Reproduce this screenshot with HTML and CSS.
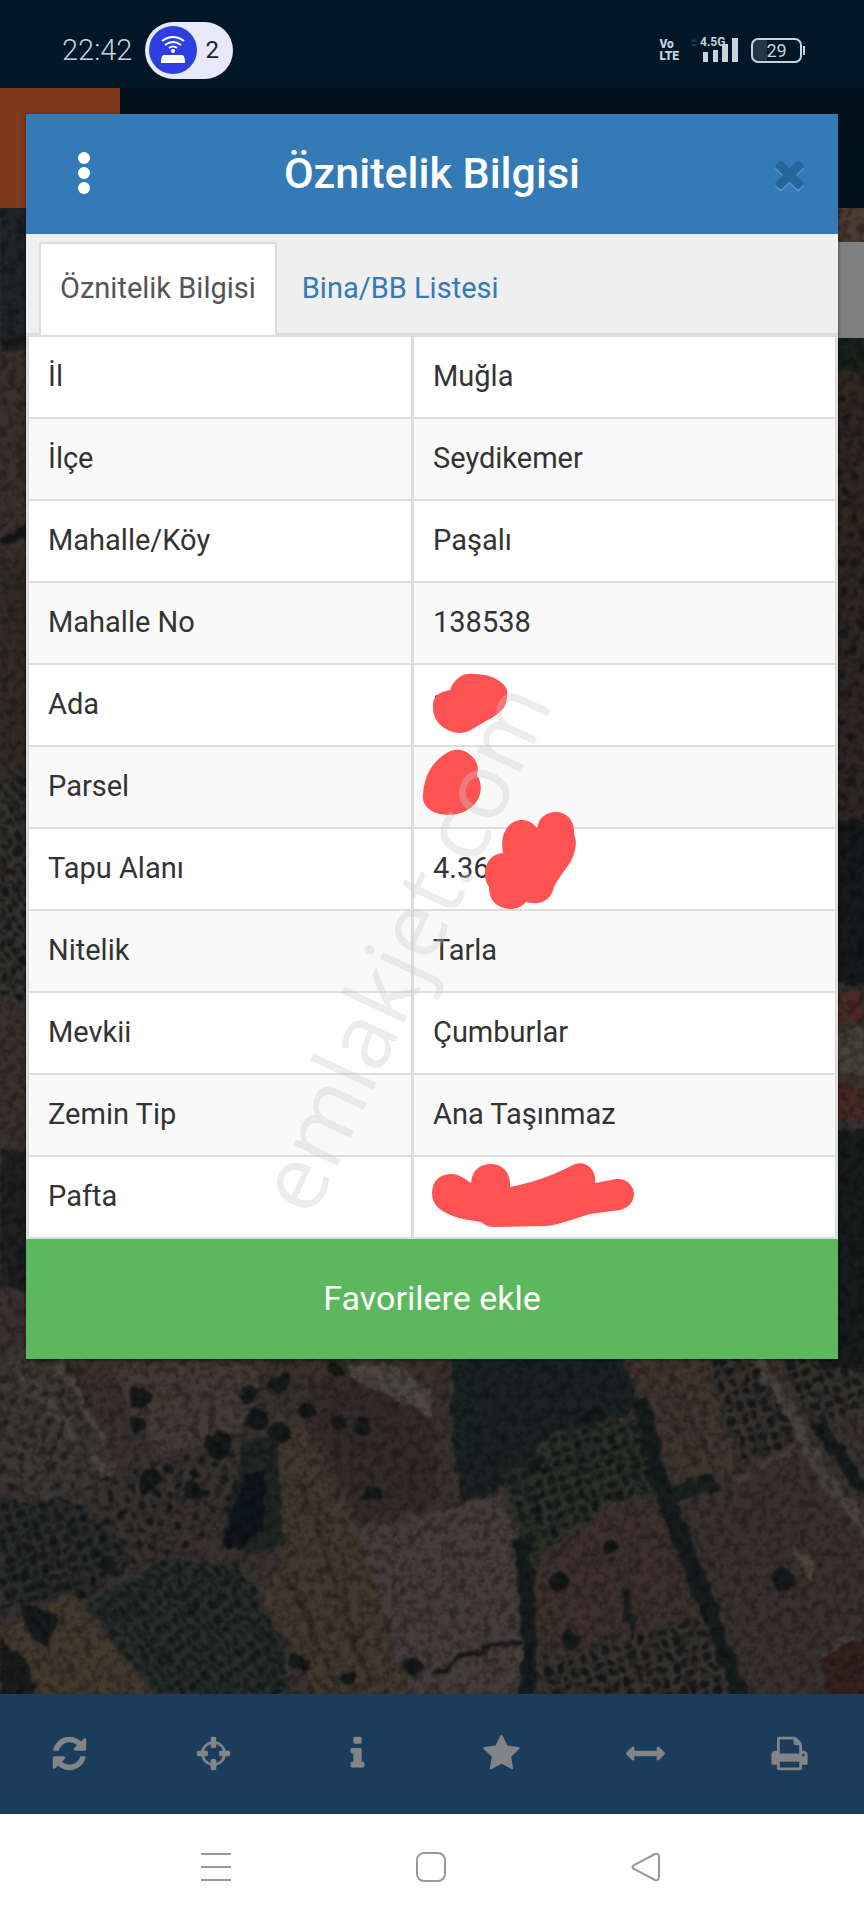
FILE: index.html
```
<!DOCTYPE html>
<html lang="tr">
<head>
    <meta charset="UTF-8">
    <meta name="viewport" content="width=device-width, initial-scale=1.0">
    <title>Öznitelik Bilgisi</title>
    <link rel="stylesheet" href="styles.css">
</head>
<body>
    <div class="screen">
        <header class="status">
            <span class="clock">22:42</span>
            <span class="pill">
                <svg class="hotspot" viewBox="0 0 48 48" aria-hidden="true">
                    <circle cx="24" cy="24" r="24" fill="#2e3fe0"/>
                    <g fill="none" stroke="#fff" stroke-width="2">
                        <path d="M13 15q11-8 22 0"/>
                        <path d="M16 19q8-6 16 0"/>
                        <path d="M20 22q4-3 8 0"/>
                    </g>
                    <circle cx="24" cy="25" r="2" fill="#fff"/>
                    <path d="M15 29h18q3 0 3 8h-24q0-8 3-8z" fill="#fff"/>
                </svg>
                <span>2</span>
            </span>
            <span class="volte"><span>Vo</span><span>LTE</span></span>
            <span class="signal">
                <span class="net">4.5G</span>
                <svg viewBox="0 0 50 26" aria-hidden="true">
                    <path d="M1 5l4-3 4 3zM1 7h8l-4 3z" fill="#243746"/>
                    <path d="M14 15h5v10h-5zM24 13h5v12h-5zM33 7h6v18h-6zM43 1h6v24h-6z" fill="#c9d1d9"/>
                </svg>
            </span>
            <span class="battery"><span>29</span></span>
        </header>

        <div class="app-bar"><div class="logo"></div></div>

        <main class="map">
            <svg class="map-image" viewBox="0 208 864 1486" preserveAspectRatio="xMidYMid slice" aria-hidden="true">
                <defs>
                    <pattern id="trees" width="12" height="12" patternUnits="userSpaceOnUse" patternTransform="rotate(-18)">
                        <circle cx="6" cy="6" r="4" fill="#161b1b"/>
                    </pattern>
                    <pattern id="sparse" width="21" height="19" patternUnits="userSpaceOnUse" patternTransform="rotate(-28)">
                        <circle cx="6" cy="6" r="4" fill="#1a1b1c"/>
                        <circle cx="16" cy="15" r="3" fill="#1f1e1f"/>
                    </pattern>
                    <pattern id="rows" width="9" height="13" patternUnits="userSpaceOnUse" patternTransform="rotate(-38)">
                        <ellipse cx="4" cy="6" rx="3" ry="5" fill="#171f1e"/>
                    </pattern>
                    <filter id="rough" x="0" y="0" width="1" height="1" color-interpolation-filters="sRGB">
                        <feTurbulence type="fractalNoise" baseFrequency="0.06" numOctaves="3" seed="4" result="n"/>
                        <feDisplacementMap in="SourceGraphic" in2="n" scale="14" xChannelSelector="R" yChannelSelector="G" result="d"/>
                        <feGaussianBlur in="d" stdDeviation="1"/>
                    </filter>
                    <filter id="grain" x="0" y="0" width="1" height="1" color-interpolation-filters="sRGB">
                        <feTurbulence type="fractalNoise" baseFrequency="0.12" numOctaves="3" seed="9"/>
                        <feColorMatrix values="0 0 0 0 0  0 0 0 0 0  0 0 0 0 0  3 0 0 0 -1.2"/>
                    </filter>
                </defs>
                <g filter="url(#rough)">
                    <rect y="208" width="864" height="1486" fill="#38322f"/>
                    <!-- left edge -->
                    <rect y="200" width="60" height="150" fill="#202426"/>
                    <rect y="350" width="60" height="210" fill="#38302c"/>
                    <path d="M0 345l60-16M0 545l60-35" stroke="#171718" stroke-width="7"/>
                    <rect y="560" width="60" height="220" fill="#302b26"/>
                    <rect y="780" width="60" height="220" fill="url(#rows)"/>
                    <rect y="1150" width="40" height="140" fill="#1f2021"/>
                    <!-- right edge -->
                    <rect x="820" y="200" width="60" height="50" fill="#4a3d34"/>
                    <rect x="820" y="330" width="60" height="40" fill="#18211b"/>
                    <rect x="820" y="370" width="60" height="450" fill="#302724"/>
                    <rect x="820" y="400" width="60" height="420" fill="url(#sparse)"/>
                    <rect x="820" y="820" width="60" height="165" fill="#17191b"/>
                    <path d="M834 990l30 4v32l-30-4zM834 1080l30 12v24l-30 6z" fill="#4b2a25"/>
                    <path d="M834 1034l30-4v40l-30 6z" fill="#46433e"/>
                    <rect x="820" y="1130" width="60" height="240" fill="#191c1c"/>
                    <!-- scrub and tracks on the left -->
                    <path d="M0 1350h60l60 120-50 40-70-30z" fill="#3d3835"/>
                    <path d="M20 1370l50 60 40 45M55 1360l50 80" stroke="#484441" stroke-width="9" fill="none"/>
                    <path d="M110 1365h150l-5 60-90 30-25-20z" fill="#423a36"/>
                    <path d="M345 1365l50 0 37 30v35l-60-30z" fill="#4b4642"/>
                    <path d="M300 1395l40-25 95 50v85l-75 18z" fill="#332b2a"/>
                    <path d="M0 1360h90v130H0z" fill="url(#sparse)" opacity=".6"/>
                    <path d="M100 1480l110-35 40 10-10 50-60 50-90 20z" fill="url(#sparse)"/>
                    <path d="M0 1500h75l60 60-50 38-85 10z" fill="#2c2c2d"/>
                    <path d="M0 1500h75l60 60-50 38-85 10z" fill="url(#trees)"/>
                    <path d="M0 1630l72-35 90 99H0z" fill="#43392f"/>
                    <path d="M0 1640l30 25 5 35H0z" fill="#1b1b1b"/>
                    <path d="M20 1605l35 10-5 35-15-5z" fill="#161b1d"/>
                    <path d="M85 1605l75-45 80 5 45 80 5 49H155z" fill="#292e2b"/>
                    <path d="M85 1605l75-45 80 5 45 80 5 49H155z" fill="url(#rows)"/>
                    <path d="M245 1440l45-5 10 110-55 8-22-20z" fill="#1f2622"/>
                    <path d="M245 1475l22-5-5 60-25 20-15-10z" fill="#12151c"/>
                    <path d="M275 1410l25 15 60 108 46 161h-90l-60-110 28-20z" fill="#42382f"/>
                    <path d="M300 1480l70 205M285 1570l50 110" stroke="#352e29" stroke-width="5"/>
                    <!-- plots in the middle -->
                    <path d="M358 1528l145-32 20 60-2 138H410z" fill="#433d3b"/>
                    <path d="M432 1677l35-22 50-15" stroke="#1d1c1c" stroke-width="5" fill="none"/>
                    <path d="M452 1355h170l20 55-90 25-62 60-26 6-12-60z" fill="#1a2222"/>
                    <path d="M506 1475l62-45 80-15 18 75-60 14-80 60z" fill="#2b3029"/>
                    <path d="M506 1475l62-45 80-15 18 75-60 14-80 60z" fill="url(#trees)"/>
                    <path d="M528 1575l76-66 55-10 35 115-130 40-35 5z" fill="#3d302d"/>
                    <path d="M545 1660l150-44 45 78H545z" fill="url(#trees)"/>
                    <path d="M622 1355h80l35 115-60 12z" fill="#41352f"/>
                    <path d="M650 1370l45 95M668 1365l40 90" stroke="#372d29" stroke-width="4"/>
                    <path d="M640 1400l22 90 44 110 36 100M522 1540l6 70v90" stroke="#171d1d" stroke-width="17" fill="none"/>
                    <path d="M624 1585l10 50" stroke="#1d2020" stroke-width="8"/>
                    <path d="M672 1493l45-8" stroke="#1a221f" stroke-width="15"/>
                    <!-- right side plots and road -->
                    <path d="M702 1355h60l38 85-60 28z" fill="url(#trees)"/>
                    <path d="M778 1355h90v55l-55 15z" fill="url(#trees)"/>
                    <path d="M815 1420l40 60 12 10" stroke="#161d1c" stroke-width="14" fill="none"/>
                    <path d="M756 1355l75 130 40 50" stroke="#484341" stroke-width="12" fill="none"/>
                    <path d="M735 1480l60-30M820 1660l45-30" stroke="#453c38" stroke-width="6"/>
                    <path d="M822 1660l50-30v70h-42z" fill="#35211e"/>
                    <path d="M795 1550l15 5 5 30-10-10z" fill="#51443a"/>
                    <g fill="#161a1a">
                        <circle cx="140" cy="1397" r="12"/><circle cx="138" cy="1424" r="9"/>
                        <circle cx="249" cy="1395" r="10"/><circle cx="257" cy="1420" r="12"/>
                        <circle cx="278" cy="1383" r="10"/><circle cx="280" cy="1432" r="11"/>
                        <circle cx="334" cy="1369" r="8"/><circle cx="307" cy="1411" r="8"/>
                        <circle cx="338" cy="1422" r="7"/><circle cx="363" cy="1428" r="10"/>
                        <circle cx="372" cy="1493" r="9"/><circle cx="216" cy="1445" r="13"/>
                        <circle cx="150" cy="1482" r="11"/><circle cx="194" cy="1492" r="9"/>
                        <circle cx="108" cy="1565" r="8"/><circle cx="299" cy="1662" r="8"/>
                        <circle cx="412" cy="1668" r="11"/><circle cx="350" cy="1678" r="9"/>
                        <circle cx="609" cy="1546" r="9"/><circle cx="559" cy="1584" r="11"/>
                        <circle cx="568" cy="1640" r="10"/><circle cx="783" cy="1579" r="12"/>
                        <circle cx="535" cy="1466" r="9"/><circle cx="592" cy="1416" r="9"/>
                    </g>
                </g>
                <rect y="208" width="864" height="1486" filter="url(#grain)" opacity=".3"/>
            </svg>
            <div class="map-panel"></div>
        </main>

        <nav class="toolbar">
            <button type="button" aria-label="Yenile"><svg viewBox="0 0 1792 1792"><path d="M1639 1056q0 5-1 7-64 268-268 434.5t-478 166.5q-146 0-282.5-55t-243.5-157l-129 129q-19 19-45 19t-45-19-19-45v-448q0-26 19-45t45-19h448q26 0 45 19t19 45-19 45l-137 137q71 66 161 102t187 36q134 0 250-65t186-179q11-17 53-117 8-23 30-23h192q13 0 22.5 9.5t9.5 22.5zm25-800v448q0 26-19 45t-45 19h-448q-26 0-45-19t-19-45 19-45l138-138q-148-137-349-137-134 0-250 65t-186 179q-11 17-53 117-8 23-30 23h-199q-13 0-22.5-9.5t-9.5-22.5v-7q65-268 270-434.5t480-166.5q146 0 284 55.5t245 156.5l130-129q19-19 45-19t45 19 19 45z"/></svg></button>
            <button type="button" aria-label="Konum"><svg viewBox="0 0 1792 1792"><path d="M1325 1024h-109q-26 0-45-19t-19-45v-128q0-26 19-45t45-19h109q-32-108-112.5-188.5t-188.5-112.5v109q0 26-19 45t-45 19h-128q-26 0-45-19t-19-45v-109q-108 32-188.5 112.5t-112.5 188.5h109q26 0 45 19t19 45v128q0 26-19 45t-45 19h-109q32 108 112.5 188.5t188.5 112.5v-109q0-26 19-45t45-19h128q26 0 45 19t19 45v109q108-32 188.5-112.5t112.5-188.5zm339-192v128q0 26-19 45t-45 19h-143q-37 161-154.5 278.5t-278.5 154.5v143q0 26-19 45t-45 19h-128q-26 0-45-19t-19-45v-143q-161-37-278.5-154.5t-154.5-278.5h-143q-26 0-45-19t-19-45v-128q0-26 19-45t45-19h143q37-161 154.5-278.5t278.5-154.5v-143q0-26 19-45t45-19h128q26 0 45 19t19 45v143q161 37 278.5 154.5t154.5 278.5h143q26 0 45 19t19 45z"/></svg></button>
            <button type="button" aria-label="Bilgi"><svg viewBox="0 0 1792 1792"><path d="M1216 1344v128q0 26-19 45t-45 19h-512q-26 0-45-19t-19-45v-128q0-26 19-45t45-19h64v-384h-64q-26 0-45-19t-19-45v-128q0-26 19-45t45-19h384q26 0 45 19t19 45v576h64q26 0 45 19t19 45zm-128-1152v192q0 26-19 45t-45 19h-256q-26 0-45-19t-19-45v-192q0-26 19-45t45-19h256q26 0 45 19t19 45z"/></svg></button>
            <button type="button" aria-label="Favoriler"><svg viewBox="0 0 1792 1792"><path d="M1728 647q0 22-26 48l-363 354 86 500q1 7 1 20 0 21-10.5 35.5t-30.5 14.5q-19 0-40-12l-449-236-449 236q-22 12-40 12-21 0-31.5-14.5t-10.5-35.5q0-6 2-20l86-500-364-354q-25-27-25-48 0-37 56-46l502-73 225-455q19-41 49-41t49 41l225 455 502 73q56 9 56 46z"/></svg></button>
            <button type="button" aria-label="Ölçüm"><svg viewBox="0 0 1792 1792"><path d="M1792 896q0 26-19 45l-256 256q-19 19-45 19t-45-19-19-45v-128h-1024v128q0 26-19 45t-45 19-45-19l-256-256q-19-19-19-45t19-45l256-256q19-19 45-19t45 19 19 45v128h1024v-128q0-26 19-45t45-19 45 19l256 256q19 19 19 45z"/></svg></button>
            <button type="button" aria-label="Yazdır"><svg viewBox="0 0 1792 1792"><path d="M448 1536h896v-256h-896v256zm0-640h896v-384h-160q-40 0-68-28t-28-68v-160h-640v640zm1152 64q0-26-19-45t-45-19-45 19-19 45 19 45 45 19 45-19 19-45zm128 0v416q0 13-9.5 22.5t-22.5 9.5h-224v160q0 40-28 68t-68 28h-960q-40 0-68-28t-28-68v-160h-224q-13 0-22.5-9.5t-9.5-22.5v-416q0-79 56.5-135.5t135.5-56.5h64v-544q0-40 28-68t68-28h672q40 0 88 20t76 48l152 152q28 28 48 76t20 88v256h64q79 0 135.5 56.5t56.5 135.5z"/></svg></button>
        </nav>

        <nav class="system-nav">
            <button type="button" aria-label="Son uygulamalar"><svg viewBox="0 0 30 30"><path d="M0 2h30M0 15h30M0 28h30"/></svg></button>
            <button type="button" aria-label="Ana ekran"><svg viewBox="0 0 30 30"><rect x="1" y="1" width="28" height="28" rx="7"/></svg></button>
            <button type="button" aria-label="Geri"><svg viewBox="0 0 30 30"><path d="M24 2L3 13q-3 2 0 4l21 11q4 1 4-3V5q0-4-4-3z"/></svg></button>
        </nav>

        <section class="modal" role="dialog" aria-labelledby="title">
            <div class="modal-header">
                <button class="menu" type="button" aria-label="Menü">
                    <svg viewBox="0 0 12 42"><circle cx="6" cy="6" r="6"/><circle cx="6" cy="21" r="6"/><circle cx="6" cy="36" r="6"/></svg>
                </button>
                <h1 id="title">Öznitelik Bilgisi</h1>
                <button class="close" type="button" aria-label="Kapat">
                    <svg viewBox="0 0 1792 1792"><path d="M1490 1322q0 40-28 68l-136 136q-28 28-68 28t-68-28l-294-294-294 294q-28 28-68 28t-68-28l-136-136q-28-28-28-68t28-68l294-294-294-294q-28-28-28-68t28-68l136-136q28-28 68-28t68 28l294 294 294-294q28-28 68-28t68 28l136 136q28 28 28 68t-28 68l-294 294 294 294q28 28 28 68z"/></svg>
                </button>
            </div>
            <div class="tabs">
                <a class="tab active" href="#oznitelik">Öznitelik Bilgisi</a>
                <a class="tab" href="#bina">Bina/BB Listesi</a>
            </div>
            <table class="info" id="oznitelik">
                <tr><th scope="row">İl</th><td>Muğla</td></tr>
                <tr><th scope="row">İlçe</th><td>Seydikemer</td></tr>
                <tr><th scope="row">Mahalle/Köy</th><td>Paşalı</td></tr>
                <tr><th scope="row">Mahalle No</th><td>138538</td></tr>
                <tr><th scope="row">Ada</th><td></td></tr>
                <tr><th scope="row">Parsel</th><td></td></tr>
                <tr><th scope="row">Tapu Alanı</th><td>4.36</td></tr>
                <tr><th scope="row">Nitelik</th><td>Tarla</td></tr>
                <tr><th scope="row">Mevkii</th><td>Çumburlar</td></tr>
                <tr><th scope="row">Zemin Tip</th><td>Ana Taşınmaz</td></tr>
                <tr><th scope="row">Pafta</th><td></td></tr>
            </table>
            <button class="favorite" type="button">Favorilere ekle</button>

            <!-- redaction marks and watermark over the table -->
            <svg class="marks" viewBox="26 114 812 1244">
                <g fill="#ff5252">
                    <circle cx="437" cy="697" r="2" fill="#333"/>
                    <path d="M433 708C432 697 438 692 450 690C455 677 464 673 474 674C487 674 495 678 498 680C508 687 508 691 507 698C506 708 500 713 490 719C480 723 470 733 460 733C450 733 433 725 433 708Z"/>
                    <path d="M423 795C424 775 433 762 445 754C452 749 460 748 468 753C478 760 479 768 477 775C483 784 481 795 477 801C468 815 450 816 440 814C428 811 422 804 423 795Z"/>
                    <path d="M485 873C486 860 493 854 503 853C499 832 510 820 522 820C528 820 533 823 537 828C539 817 547 812 556 812C567 812 575 821 574 834C578 843 575 853 570 863C565 870 557 880 554 887C551 900 541 906 526 902C520 909 510 911 501 907C492 903 489 896 489 887C486 883 485 878 485 873Z"/>
                    <path d="M432 1193C432 1180 441 1174 451 1174C460 1174 466 1180 471 1183C472 1170 480 1164 491 1164C502 1164 511 1172 510 1187C530 1183 550 1177 575 1164C588 1160 597 1172 595 1183L616 1179C627 1178 634 1186 634 1194C634 1202 628 1208 620 1210L590 1214C570 1220 555 1226 545 1226L494 1227C487 1227 484 1224 481 1222C470 1220 460 1219 453 1216C440 1211 432 1205 432 1193Z"/>
                </g>
                <text class="watermark" text-anchor="middle" transform="translate(433 961) rotate(-65)">emlakjet.com</text>
            </svg>
        </section>
    </div>
</body>
</html>
```
FILE: styles.css
```
* {
    box-sizing: border-box;
}

body {
    margin: 0;
    font-family: Roboto, "Noto Sans", sans-serif;
    font-size: 29px;
    color: #333;
    background-color: #fff;
}

button {
    padding: 0;
    border: 0;
    background: none;
    font-family: inherit;
    cursor: pointer;
}

svg {
    display: block;
}

.screen {
    position: relative;
    display: flex;
    flex-direction: column;
    min-height: 100vh;
}

/* phone status bar */
.status {
    display: flex;
    align-items: center;
    height: 88px;
    padding: 12px 62px 0 62px;
    background-color: #00172a;
    color: #c9d1d9;
}

.clock {
    font-size: 29px;
    font-weight: 300;
}

.pill {
    display: flex;
    align-items: center;
    gap: 8px;
    width: 88px;
    height: 57px;
    margin-left: 13px;
    margin-right: auto;
    padding-left: 4px;
    border-radius: 29px;
    background-color: #e8eafc;
    color: #222;
    font-size: 24px;
}

.hotspot {
    width: 48px;
    height: 48px;
}

.volte {
    display: flex;
    flex-direction: column;
    font-size: 12px;
    line-height: 12px;
    font-weight: 900;
}

.signal {
    position: relative;
    width: 50px;
    margin-left: 10px;
    margin-right: 12px;
}

.net {
    position: absolute;
    left: 11px;
    top: -1px;
    font-size: 12px;
    line-height: 12px;
    font-weight: 700;
}

.battery {
    position: relative;
    display: flex;
    align-items: center;
    justify-content: center;
    width: 51px;
    height: 25px;
    border: 2px solid #c9d1d9;
    border-radius: 7px;
    background: linear-gradient(90deg, #243746 30%, transparent 30%);
    font-size: 18px;
}

.battery::after {
    content: "";
    position: absolute;
    right: -5px;
    top: 6px;
    width: 2px;
    height: 9px;
    background-color: #c9d1d9;
}

/* map application behind the dialog */
.app-bar {
    height: 120px;
    background-color: #00101a;
}

.logo {
    width: 120px;
    height: 100%;
    background-color: #7f3a1b;
}

.map {
    position: relative;
    flex: 1;
    overflow: hidden;
    background-color: #38322f;
}

.map-image {
    position: absolute;
    width: 100%;
    height: 100%;
}

.map-panel {
    position: absolute;
    top: 34px;
    right: 0;
    width: 96px;
    height: 96px;
    background-color: #808080;
}

.toolbar {
    display: flex;
    height: 120px;
    background-color: #1a3d5b;
}

.toolbar button {
    flex: 1;
    display: flex;
    align-items: center;
    justify-content: center;
    padding: 0 5px 2px 0;
}

.toolbar svg {
    width: 39px;
    height: 39px;
    fill: #838485;
}

.system-nav {
    display: flex;
    height: 106px;
    padding: 0 110px;
    background-color: #fff;
}

.system-nav button {
    flex: 1;
    display: flex;
    align-items: center;
    justify-content: center;
    padding-right: 2px;
}

.system-nav svg {
    width: 30px;
    height: 30px;
    fill: none;
    stroke: #999;
    stroke-width: 2;
}

/* dialog */
.modal {
    position: absolute;
    top: 114px;
    left: 26px;
    right: 26px;
    background-color: #fff;
    box-shadow: 0 1px 4px rgba(0, 0, 0, 0.5);
}

.modal-header {
    display: grid;
    grid-template-columns: 1fr auto 1fr;
    align-items: center;
    height: 120px;
    padding: 0 27px 2px 37px;
    background-color: #337ab7;
}

.modal-header h1 {
    margin: 0 10px 0 0;
    font-size: 43px;
    font-weight: 500;
    color: #fff;
}

.menu {
    display: flex;
    justify-content: center;
    width: 42px;
}

.menu svg {
    width: 12px;
    height: 42px;
    fill: #fff;
}

.close {
    justify-self: end;
}

.close svg {
    width: 43px;
    height: 43px;
    fill: #29659a;
    filter: drop-shadow(0 2px 0 #5b95c9);
}

.tabs {
    display: flex;
    height: 101px;
    padding: 8px 13px 0;
    border-bottom: 2px solid #ddd;
    background-color: #efefef;
}

.tab {
    display: flex;
    align-items: center;
    margin-right: 4px;
    margin-bottom: -2px;
    padding: 0 19px 4px;
    border: 2px solid transparent;
    border-bottom: 0;
    color: #337ab7;
    text-decoration: none;
}

.tab.active {
    border-color: #ddd;
    background-color: #fff;
    color: #555;
}

.info {
    width: 100%;
    border-collapse: collapse;
    table-layout: fixed;
}

.info th,
.info td {
    height: 82px;
    padding: 0 0 3px 19px;
    border: 3px solid #ddd;
    border-width: 2px 3px;
    font-weight: 400;
    text-align: left;
}

.info th {
    width: 385px;
}

.info tr:nth-child(even) {
    background-color: #f9f9f9;
}

.favorite {
    display: block;
    width: 100%;
    height: 120px;
    padding-bottom: 2px;
    background-color: #5cb85c;
    color: #fff;
    font-size: 34px;
}

.marks {
    position: absolute;
    top: 0;
    left: 0;
    width: 100%;
    pointer-events: none;
}

.watermark {
    font-family: "Open Sans", sans-serif;
    font-size: 91px;
    fill: #cacaca;
    fill-opacity: 0.36;
}
```
